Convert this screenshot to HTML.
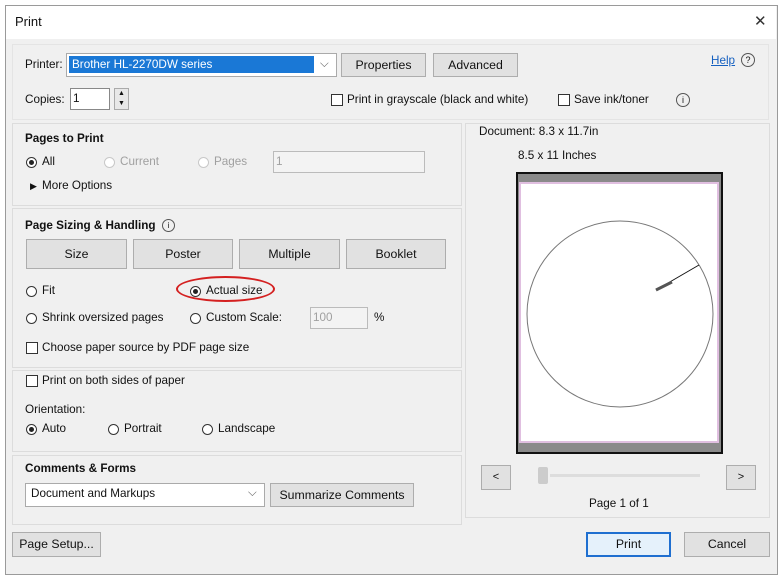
<!DOCTYPE html>
<html><head><style>
body{margin:0;width:783px;height:579px;background:#fff;font-family:"Liberation Sans",sans-serif;font-size:11.7px;color:#111;position:relative;overflow:hidden}
.a{position:absolute}
.dlg{left:5px;top:5px;width:771px;height:568px;background:#f0f0f0;border:1px solid #9a9a9a}
.title{left:6px;top:6px;width:770px;height:33px;background:#fff}
.btn{position:absolute;background:#e1e1e1;border:1px solid #adadad;text-align:center;box-sizing:border-box;font-size:12.3px}
.sec{position:absolute;border:1px solid #dcdcdc;box-sizing:border-box}
.rad{position:absolute;width:11px;height:11px;border:1px solid #333;border-radius:50%;background:#fff;box-sizing:border-box}
.rad.on::after{content:"";position:absolute;left:2px;top:2px;width:5px;height:5px;border-radius:50%;background:#222}
.rad.dis{border-color:#c8c8c8}
.chk{position:absolute;width:12px;height:12px;border:1px solid #333;background:#fff;box-sizing:border-box}
.t{position:absolute;white-space:nowrap}
.g{color:#a0a0a0}
b{font-weight:bold}
</style></head><body>
<div class="a dlg"></div>
<div class="a title"></div>
<div class="t" style="left:15px;top:14px;font-size:13px">Print</div>
<div class="t" style="left:754px;top:12px;font-size:15px;color:#333">✕</div>

<div class="sec" style="left:12px;top:44px;width:757px;height:76px;border-color:#e4e4e4"></div>
<div class="t" style="left:25px;top:58px">Printer:</div>
<div class="a" style="left:66px;top:53px;width:269px;height:22px;background:#fff;border:1px solid #aaa"></div>
<div class="a" style="left:69px;top:56px;width:245px;height:17px;background:#1a78d6"></div>
<div class="t" style="left:72px;top:58px;color:#fff">Brother HL-2270DW series</div>
<div class="t" style="left:320px;top:57px;color:#666">⌵</div>
<div class="btn" style="left:341px;top:53px;width:85px;height:24px;line-height:22px">Properties</div>
<div class="btn" style="left:433px;top:53px;width:85px;height:24px;line-height:22px">Advanced</div>
<div class="t" style="left:711px;top:54px;color:#1560c0;text-decoration:underline">Help</div>
<div class="a" style="left:741px;top:53px;width:12px;height:12px;border:1px solid #555;border-radius:50%;font-size:9px;text-align:center;line-height:12px">?</div>
<div class="t" style="left:25px;top:93px">Copies:</div>
<div class="a" style="left:70px;top:88px;width:38px;height:20px;background:#fff;border:1px solid #888"></div>
<div class="t" style="left:73px;top:92px">1</div>
<div class="a" style="left:114px;top:88px;width:13px;height:20px;background:#e8e8e8;border:1px solid #aaa;font-size:7px;text-align:center;line-height:10px">▲<br>▼</div>
<div class="chk" style="left:331px;top:94px"></div>
<div class="t" style="left:347px;top:93px">Print in grayscale (black and white)</div>
<div class="chk" style="left:558px;top:94px"></div>
<div class="t" style="left:574px;top:93px">Save ink/toner</div>
<div class="a" style="left:676px;top:93px;width:12px;height:12px;border:1px solid #555;border-radius:50%;font-size:9px;text-align:center;line-height:12px">i</div>

<div class="sec" style="left:12px;top:123px;width:450px;height:83px"></div>
<div class="t" style="left:25px;top:132px"><b>Pages to Print</b></div>
<div class="rad on" style="left:26px;top:157px"></div><div class="t" style="left:42px;top:155px">All</div>
<div class="rad dis" style="left:104px;top:157px"></div><div class="t g" style="left:120px;top:155px">Current</div>
<div class="rad dis" style="left:198px;top:157px"></div><div class="t g" style="left:214px;top:155px">Pages</div>
<div class="a" style="left:273px;top:151px;width:150px;height:20px;border:1px solid #bbb;background:#f3f3f3"></div>
<div class="t g" style="left:276px;top:155px">1</div>
<div class="t" style="left:30px;top:181px;font-size:9px">▶</div>
<div class="t" style="left:42px;top:179px">More Options</div>

<div class="sec" style="left:12px;top:208px;width:450px;height:160px"></div>
<div class="t" style="left:25px;top:219px"><b>Page Sizing &amp; Handling</b></div>
<div class="a" style="left:162px;top:219px;width:11px;height:11px;border:1px solid #555;border-radius:50%;font-size:8px;text-align:center;line-height:11px">i</div>
<div class="btn" style="left:26px;top:239px;width:101px;height:30px;line-height:28px">Size</div>
<div class="btn" style="left:133px;top:239px;width:100px;height:30px;line-height:28px">Poster</div>
<div class="btn" style="left:239px;top:239px;width:101px;height:30px;line-height:28px">Multiple</div>
<div class="btn" style="left:346px;top:239px;width:100px;height:30px;line-height:28px">Booklet</div>
<div class="rad" style="left:26px;top:286px"></div><div class="t" style="left:42px;top:284px">Fit</div>
<div class="a" style="left:176px;top:276px;width:99px;height:26px;border:2px solid #d42020;border-radius:50%;box-sizing:border-box"></div>
<div class="rad on" style="left:190px;top:286px"></div><div class="t" style="left:206px;top:284px">Actual size</div>
<div class="rad" style="left:26px;top:313px"></div><div class="t" style="left:42px;top:311px">Shrink oversized pages</div>
<div class="rad" style="left:190px;top:313px"></div><div class="t" style="left:206px;top:311px">Custom Scale:</div>
<div class="a" style="left:310px;top:307px;width:56px;height:20px;border:1px solid #bbb;background:#f3f3f3"></div>
<div class="t g" style="left:313px;top:311px">100</div>
<div class="t" style="left:374px;top:311px">%</div>
<div class="chk" style="left:26px;top:342px"></div><div class="t" style="left:42px;top:341px">Choose paper source by PDF page size</div>

<div class="sec" style="left:12px;top:370px;width:450px;height:82px"></div>
<div class="chk" style="left:26px;top:375px"></div><div class="t" style="left:42px;top:374px">Print on both sides of paper</div>
<div class="t" style="left:25px;top:403px">Orientation:</div>
<div class="rad on" style="left:26px;top:424px"></div><div class="t" style="left:42px;top:422px">Auto</div>
<div class="rad" style="left:108px;top:424px"></div><div class="t" style="left:124px;top:422px">Portrait</div>
<div class="rad" style="left:202px;top:424px"></div><div class="t" style="left:218px;top:422px">Landscape</div>

<div class="sec" style="left:12px;top:455px;width:450px;height:70px"></div>
<div class="t" style="left:25px;top:462px"><b>Comments &amp; Forms</b></div>
<div class="a" style="left:25px;top:483px;width:238px;height:22px;background:#fff;border:1px solid #aaa"></div>
<div class="t" style="left:31px;top:487px">Document and Markups</div>
<div class="t" style="left:248px;top:486px;color:#666">⌵</div>
<div class="btn" style="left:270px;top:483px;width:144px;height:24px;line-height:22px">Summarize Comments</div>

<div class="sec" style="left:465px;top:123px;width:305px;height:395px"></div>
<div class="t" style="left:479px;top:125px">Document: 8.3 x 11.7in</div>
<div class="t" style="left:518px;top:149px">8.5 x 11 Inches</div>
<div class="a" style="left:516px;top:172px;width:207px;height:282px;background:#8a8a8a;border:2px solid #111;box-sizing:border-box"></div>
<div class="a" style="left:519px;top:182px;width:200px;height:261px;background:#fff;border:2px solid #e0bfe0;box-sizing:border-box"></div>
<svg class="a" style="left:516px;top:172px" width="207" height="282"><circle cx="104" cy="142" r="93" fill="none" stroke="#777" stroke-width="1"/><line x1="140" y1="118" x2="183" y2="93" stroke="#111"/><line x1="140" y1="118" x2="156" y2="110" stroke="#555" stroke-width="3"/></svg>
<div class="btn" style="left:481px;top:465px;width:30px;height:25px;line-height:23px;font-size:11px">&lt;</div>
<div class="a" style="left:550px;top:474px;width:150px;height:3px;background:#ddd"></div>
<div class="a" style="left:538px;top:467px;width:10px;height:17px;background:#ccc;border-radius:2px"></div>
<div class="btn" style="left:726px;top:465px;width:30px;height:25px;line-height:23px;font-size:11px">&gt;</div>
<div class="t" style="left:589px;top:497px">Page 1 of 1</div>

<div class="btn" style="left:12px;top:532px;width:89px;height:25px;line-height:23px">Page Setup...</div>
<div class="btn" style="left:586px;top:532px;width:85px;height:25px;line-height:21px;border:2px solid #1f6fd0;background:#e5f1fb">Print</div>
<div class="btn" style="left:684px;top:532px;width:86px;height:25px;line-height:23px">Cancel</div>
</body></html>
